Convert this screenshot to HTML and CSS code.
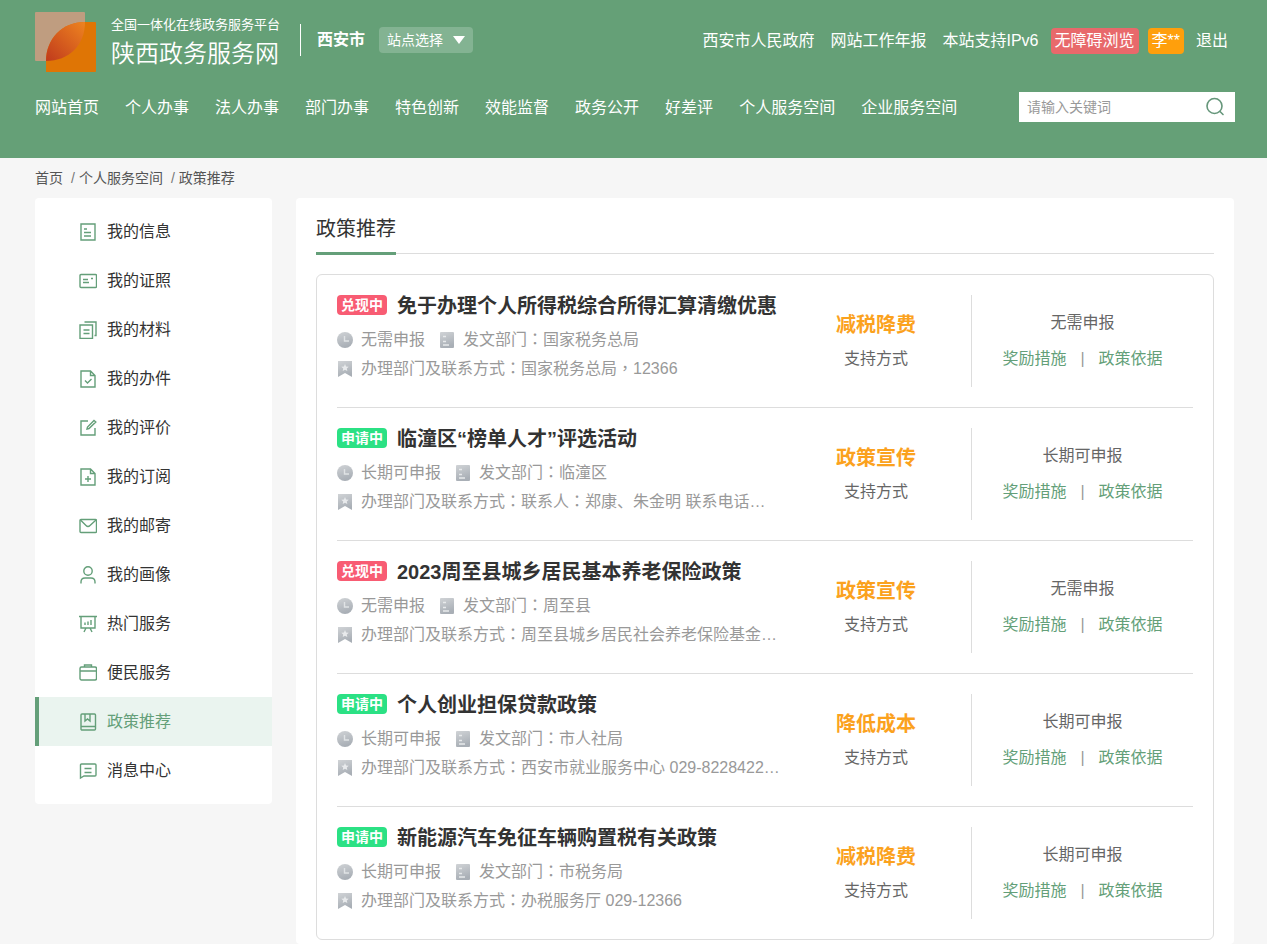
FILE: index.html
```html
<!DOCTYPE html>
<html lang="zh-CN">
<head>
    <meta charset="UTF-8">
    <meta name="viewport" content="width=device-width, initial-scale=1.0">
    <title>政策推荐</title>
    <link rel="stylesheet" href="styles.css">
</head>
<body>

<!-- Shared gradient and list icons -->
<svg class="sprite" width="0" height="0" aria-hidden="true">
    <defs>
        <linearGradient id="grey" x1="0" y1="0" x2="0.3" y2="1">
            <stop offset="0" stop-color="#d0d3d6"/>
            <stop offset="1" stop-color="#a9afb6"/>
        </linearGradient>
        <symbol id="icon-clock" viewBox="0 0 16 16">
            <circle cx="8" cy="8" r="8" fill="url(#grey)"/>
            <path d="M7.5 4v5H12" fill="none" stroke="#e0e3e5" stroke-width="1.4"/>
        </symbol>
        <symbol id="icon-doc" viewBox="0 0 16 16">
            <rect x="1" y="0" width="14" height="16" rx="1" fill="url(#grey)"/>
            <path d="M4 4.5h3M4 9.5h3M4 13h6" fill="none" stroke="#e8eaec" stroke-width="1.4"/>
        </symbol>
        <symbol id="icon-mark" viewBox="0 0 16 16">
            <path d="M1 0h14v16l-7-4-7 4z" fill="url(#grey)"/>
            <path d="M8 3l1.1 2.4 2.6.3-1.9 1.8.5 2.6L8 8.8l-2.3 1.3.5-2.6-1.9-1.8 2.6-.3z" fill="#e8eaec"/>
        </symbol>
    </defs>
</svg>

<!-- Header -->
<header class="header">
    <div class="header-top">
        <a class="logo" href="#">
            <svg class="logo-icon" width="61" height="60" viewBox="0 0 61 60" aria-hidden="true">
                <defs>
                    <linearGradient id="leaf" x1="0" y1="1" x2="1" y2="0">
                        <stop offset="0" stop-color="#c03a1c"/>
                        <stop offset="1" stop-color="#ee8420"/>
                    </linearGradient>
                </defs>
                <rect x="0" y="0" width="50" height="49" rx="1" fill="#bf9d80"/>
                <path d="M11 60V49C11 27 27 10 50 10h10a1 1 0 0 1 1 1v48a1 1 0 0 1-1 1z" fill="#df7505"/>
                <path d="M11 49C11 27 27 10 50 10C50 33 34 49 11 49z" fill="url(#leaf)"/>
            </svg>
            <span class="logo-text">
                <span class="logo-small">全国一体化在线政务服务平台</span>
                <span class="logo-big">陕西政务服务网</span>
            </span>
        </a>
        <div class="site">
            <strong class="site-name">西安市</strong>
            <div class="site-select">
                <select aria-label="站点选择">
                    <option>站点选择</option>
                </select>
                <svg class="site-arrow" width="12" height="8" viewBox="0 0 12 8" aria-hidden="true"><path d="M0 0h12L6 8z" fill="#fff"/></svg>
            </div>
        </div>
        <div class="top-links">
            <a href="#">西安市人民政府</a>
            <a href="#">网站工作年报</a>
            <a href="#">本站支持IPv6</a>
            <div class="user-links">
                <a class="tag tag-red" href="#">无障碍浏览</a>
                <a class="tag tag-orange" href="#">李**</a>
                <a class="logout" href="#">退出</a>
            </div>
        </div>
    </div>
    <div class="header-nav">
        <nav class="nav">
            <a href="#">网站首页</a>
            <a href="#">个人办事</a>
            <a href="#">法人办事</a>
            <a href="#">部门办事</a>
            <a href="#">特色创新</a>
            <a href="#">效能监督</a>
            <a href="#">政务公开</a>
            <a href="#">好差评</a>
            <a href="#">个人服务空间</a>
            <a href="#">企业服务空间</a>
        </nav>
        <form class="search">
            <input type="text" placeholder="请输入关键词" aria-label="请输入关键词">
            <button type="button" aria-label="搜索">
                <svg width="20" height="20" viewBox="0 0 20 20" fill="none" stroke="#65967a" stroke-width="1.6" stroke-linecap="round"><circle cx="9.5" cy="9" r="7.5"/><path d="M15 14.5l3 3"/></svg>
            </button>
        </form>
    </div>
</header>

<!-- Breadcrumb -->
<div class="crumbs">
    <a href="#">首页</a>
    <span class="slash">/</span>
    <a href="#">个人服务空间</a>
    <span class="slash">/</span>
    <span>政策推荐</span>
</div>

<div class="main">
    <!-- Side menu -->
    <nav class="side">
        <a class="side-item" href="#">
            <svg class="icon" viewBox="0 0 18 18"><path d="M2 1h14v16H2zM5 6h3M5 9.500h7M5 13h7"/></svg>我的信息
        </a>
        <a class="side-item" href="#">
            <svg class="icon" viewBox="0 0 18 18"><rect x="1" y="2.500" width="16.500" height="13" rx="1"/><path d="M4 7.500h5M4 10.500h6M12 6.500h2"/></svg>我的证照
        </a>
        <a class="side-item" href="#">
            <svg class="icon" viewBox="0 0 18 18"><path d="M1 4h12.500v13.500H1zM4.500 9h6M4.500 12.500h6M5.500 1H17v13.500h-1.500"/></svg>我的材料
        </a>
        <a class="side-item" href="#">
            <svg class="icon" viewBox="0 0 18 18"><path d="M2 1h9.500L16 5.500V17H2zM11.500 1v4.500H16M6 10.500L8.500 13l4-4"/></svg>我的办件
        </a>
        <a class="side-item" href="#">
            <svg class="icon" viewBox="0 0 18 18"><path d="M9 2H2v14h14V9M8 10l.5-2L15 1.500l1.800 1.500L10 9.500z"/></svg>我的评价
        </a>
        <a class="side-item" href="#">
            <svg class="icon" viewBox="0 0 18 18"><path d="M2 1h9.500L16 5.500V17H2zM11.500 1v4.500H16M9 8v6M6 11h6"/></svg>我的订阅
        </a>
        <a class="side-item" href="#">
            <svg class="icon" viewBox="0 0 18 18"><rect x="1" y="2.500" width="16.500" height="13" rx="1"/><path d="M1.500 3l5.500 5.500q2 2 4 0L17 3"/></svg>我的邮寄
        </a>
        <a class="side-item" href="#">
            <svg class="icon" viewBox="0 0 18 18"><circle cx="9" cy="5" r="4.200"/><path d="M2 17.500v-1.500q0-4 4-4h6q4 0 4 4v1.500"/></svg>我的画像
        </a>
        <a class="side-item" href="#">
            <svg class="icon" viewBox="0 0 18 18"><path d="M0 1.500h18M2 1.500v11.500h14V1.500M6 7.500v2.500M9 6.500v3.500M12 5v5M7 13l-2 4M11 13l2 4"/></svg>热门服务
        </a>
        <a class="side-item" href="#">
            <svg class="icon" viewBox="0 0 18 18"><rect x="1" y="3" width="16.500" height="13" rx="1.500"/><path d="M5.500 3V1h7v2M1 7h16.500"/></svg>便民服务
        </a>
        <a class="side-item active" href="#">
            <svg class="icon" viewBox="0 0 18 18"><rect x="2" y="1" width="14.500" height="16" rx="1"/><path d="M2 13.500h14.500M6 1v7l2.500-2L11 8V1"/></svg>政策推荐
        </a>
        <a class="side-item" href="#">
            <svg class="icon" viewBox="0 0 18 18"><path d="M1.500 16V3q0-1 1-1H16q1 0 1 1v10q0 1-1 1H5zM5.500 6.500h7M5.500 10.500h7"/></svg>消息中心
        </a>
    </nav>

    <!-- Policy list -->
    <section class="panel">
        <div class="panel-head">
            <h2>政策推荐</h2>
        </div>
        <div class="list">
            <div class="item">
                <div class="info">
                    <h3 class="item-title"><span class="badge badge-red">兑现中</span>免于办理个人所得税综合所得汇算清缴优惠</h3>
                    <div class="meta">
                        <svg><use href="#icon-clock"/></svg><span class="meta-time">无需申报</span>
                        <svg><use href="#icon-doc"/></svg><span>发文部门<i lang="zh-TW">：</i>国家税务总局</span>
                    </div>
                    <div class="meta">
                        <svg><use href="#icon-mark"/></svg><span class="meta-text">办理部门及联系方式<i lang="zh-TW">：</i>国家税务总局<i lang="zh-TW">，</i>12366</span>
                    </div>
                </div>
                <div class="way">
                    <strong>减税降费</strong>
                    <span>支持方式</span>
                </div>
                <div class="actions">
                    <span>无需申报</span>
                    <div class="links"><a href="#">奖励措施</a><span class="bar">|</span><a href="#">政策依据</a></div>
                </div>
            </div>
            <div class="item">
                <div class="info">
                    <h3 class="item-title"><span class="badge badge-green">申请中</span>临潼区“榜单人才”评选活动</h3>
                    <div class="meta">
                        <svg><use href="#icon-clock"/></svg><span class="meta-time">长期可申报</span>
                        <svg><use href="#icon-doc"/></svg><span>发文部门<i lang="zh-TW">：</i>临潼区</span>
                    </div>
                    <div class="meta">
                        <svg><use href="#icon-mark"/></svg><span class="meta-text">办理部门及联系方式<i lang="zh-TW">：</i>联系人<i lang="zh-TW">：</i>郑康、朱金明 联系电话…</span>
                    </div>
                </div>
                <div class="way">
                    <strong>政策宣传</strong>
                    <span>支持方式</span>
                </div>
                <div class="actions">
                    <span>长期可申报</span>
                    <div class="links"><a href="#">奖励措施</a><span class="bar">|</span><a href="#">政策依据</a></div>
                </div>
            </div>
            <div class="item">
                <div class="info">
                    <h3 class="item-title"><span class="badge badge-red">兑现中</span>2023周至县城乡居民基本养老保险政策</h3>
                    <div class="meta">
                        <svg><use href="#icon-clock"/></svg><span class="meta-time">无需申报</span>
                        <svg><use href="#icon-doc"/></svg><span>发文部门<i lang="zh-TW">：</i>周至县</span>
                    </div>
                    <div class="meta">
                        <svg><use href="#icon-mark"/></svg><span class="meta-text">办理部门及联系方式<i lang="zh-TW">：</i>周至县城乡居民社会养老保险基金…</span>
                    </div>
                </div>
                <div class="way">
                    <strong>政策宣传</strong>
                    <span>支持方式</span>
                </div>
                <div class="actions">
                    <span>无需申报</span>
                    <div class="links"><a href="#">奖励措施</a><span class="bar">|</span><a href="#">政策依据</a></div>
                </div>
            </div>
            <div class="item">
                <div class="info">
                    <h3 class="item-title"><span class="badge badge-green">申请中</span>个人创业担保贷款政策</h3>
                    <div class="meta">
                        <svg><use href="#icon-clock"/></svg><span class="meta-time">长期可申报</span>
                        <svg><use href="#icon-doc"/></svg><span>发文部门<i lang="zh-TW">：</i>市人社局</span>
                    </div>
                    <div class="meta">
                        <svg><use href="#icon-mark"/></svg><span class="meta-text">办理部门及联系方式<i lang="zh-TW">：</i>西安市就业服务中心 029-8228422…</span>
                    </div>
                </div>
                <div class="way">
                    <strong>降低成本</strong>
                    <span>支持方式</span>
                </div>
                <div class="actions">
                    <span>长期可申报</span>
                    <div class="links"><a href="#">奖励措施</a><span class="bar">|</span><a href="#">政策依据</a></div>
                </div>
            </div>
            <div class="item">
                <div class="info">
                    <h3 class="item-title"><span class="badge badge-green">申请中</span>新能源汽车免征车辆购置税有关政策</h3>
                    <div class="meta">
                        <svg><use href="#icon-clock"/></svg><span class="meta-time">长期可申报</span>
                        <svg><use href="#icon-doc"/></svg><span>发文部门<i lang="zh-TW">：</i>市税务局</span>
                    </div>
                    <div class="meta">
                        <svg><use href="#icon-mark"/></svg><span class="meta-text">办理部门及联系方式<i lang="zh-TW">：</i>办税服务厅 029-12366</span>
                    </div>
                </div>
                <div class="way">
                    <strong>减税降费</strong>
                    <span>支持方式</span>
                </div>
                <div class="actions">
                    <span>长期可申报</span>
                    <div class="links"><a href="#">奖励措施</a><span class="bar">|</span><a href="#">政策依据</a></div>
                </div>
            </div>
        </div>
    </section>
</div>

</body>
</html>
```

FILE: styles.css
```css
* {
    box-sizing: border-box;
}
body {
    margin: 0;
    background-color: #f6f6f6;
    color: #333;
    font-family: "Liberation Sans", "Noto Sans CJK SC", sans-serif;
    font-size: 16px;
    line-height: 20px;
}
a {
    color: inherit;
    text-decoration: none;
}
h2,
h3 {
    margin: 0;
    font-size: 20px;
}
.sprite {
    position: absolute;
}

/* Header */
.header {
    height: 158px;
    padding: 12px 32px 0 35px;
    background-color: #65a077;
    color: #fff;
}
.header-top {
    display: flex;
    align-items: center;
    height: 56px;
}
.logo {
    display: flex;
    align-self: flex-start;
    gap: 15px;
    padding-right: 20px;
}
.logo-text {
    display: flex;
    flex-direction: column;
}
.logo-small {
    font-size: 13px;
    line-height: 26px;
}
.logo-big {
    font-size: 24px;
    font-weight: 350;
    line-height: 32px;
}
.site {
    display: flex;
    align-items: center;
    gap: 14px;
    height: 32px;
    padding-left: 16px;
    border-left: 1px solid #fff;
}
.site-select {
    position: relative;
}
.site-select select {
    display: block;
    width: 94px;
    height: 26px;
    padding: 0 8px;
    appearance: none;
    background-color: rgba(255, 255, 255, 0.2);
    border: none;
    border-radius: 4px;
    color: #fff;
    font: inherit;
    font-size: 14px;
}
.site-arrow {
    position: absolute;
    top: 9px;
    right: 8px;
    pointer-events: none;
}
.top-links {
    display: flex;
    align-items: center;
    gap: 16px;
    margin-left: auto;
    padding: 2px 7px 0 0;
}
.user-links {
    display: flex;
    align-items: center;
    gap: 9px;
    margin-left: -4px;
}
.tag {
    padding: 0 4px;
    border-radius: 4px;
    line-height: 26px;
}
.tag-red { background-color: #e8696b; }
.tag-orange { background-color: #ff9f0c; }
.logout { padding-left: 3px; }
.header-nav {
    display: flex;
    align-items: center;
    justify-content: space-between;
    margin-top: 24px;
}
.nav {
    display: flex;
    gap: 26px;
    padding-top: 2px;
}
.search {
    display: flex;
    width: 216px;
    height: 30px;
    background-color: #fff;
}
.search input {
    flex: 1;
    min-width: 0;
    padding: 0 8px;
    border: none;
    outline: none;
    background: none;
    font: inherit;
    font-size: 14px;
}
.search input::placeholder {
    color: #999;
}
.search button {
    display: flex;
    align-items: center;
    padding: 0 10px;
    border: none;
    background: none;
    cursor: pointer;
}

/* Breadcrumb */
.crumbs {
    display: flex;
    padding: 0 35px;
    color: #555;
    font-size: 14px;
    line-height: 40px;
}
.slash {
    padding: 0 4px 0 8px;
    color: #777;
}

/* Page body */
.main {
    display: flex;
    align-items: flex-start;
    gap: 24px;
    padding: 0 33px 0 35px;
}
.side {
    flex: 0 0 237px;
    padding: 9px 0;
    background-color: #fff;
    border-radius: 4px;
}
.side-item {
    display: flex;
    align-items: center;
    gap: 10px;
    height: 49px;
    padding-left: 40px;
    border-left: 4px solid transparent;
}
.side-item.active {
    background-color: #eaf4ef;
    border-left-color: #649f79;
    color: #649f79;
}
.icon {
    width: 18px;
    height: 18px;
    fill: none;
    stroke: #649f79;
    stroke-width: 1.4;
}

/* Policy list */
.panel {
    flex: 1;
    min-width: 0;
    padding: 0 20px 4px;
    background-color: #fff;
    border-radius: 4px;
}
.panel-head {
    display: flex;
    height: 56px;
    border-bottom: 1px solid #ddd;
}
.panel-head h2 {
    height: 57px;
    border-bottom: 3px solid #649f79;
    font-weight: normal;
    line-height: 62px;
}
.list {
    margin-top: 20px;
    padding: 0 20px;
    border: 1px solid #ddd;
    border-radius: 6px;
}
.item {
    display: flex;
    padding: 20px 0;
    border-bottom: 1px solid #ddd;
}
.item:last-child {
    border-bottom: none;
}
.info {
    flex: 1;
    min-width: 0;
}
.item-title {
    display: flex;
    align-items: flex-start;
    gap: 10px;
    margin-bottom: 8px;
    line-height: 22px;
}
.badge {
    padding: 0 4px;
    border-radius: 4px;
    color: #fff;
    font-size: 14px;
    line-height: 20px;
}
.badge-red { background-color: #f85c73; }
.badge-green { background-color: #2be184; }
.meta {
    display: flex;
    align-items: center;
    gap: 8px;
    color: #999;
    line-height: 29px;
}
.meta svg {
    flex: none;
    width: 16px;
    height: 16px;
}
/* Centred full-width punctuation */
.meta i {
    font-family: "Noto Sans CJK TC", sans-serif;
    font-style: normal;
    line-height: 1;
}
.meta-time {
    padding-right: 6px;
}
.meta-text {
    overflow: hidden;
    text-overflow: ellipsis;
    white-space: nowrap;
}
.way,
.actions {
    display: flex;
    flex-direction: column;
    align-items: center;
    justify-content: center;
    height: 92px;
    color: #666;
}
.way {
    width: 190px;
    padding-top: 2px;
    line-height: 34px;
}
.way strong {
    color: #fba21e;
    font-size: 20px;
}
.actions {
    width: 222px;
    border-left: 1px solid #ddd;
    line-height: 36px;
}
.links {
    display: flex;
    gap: 14px;
    color: #649f79;
}
.bar {
    color: #999;
}
```
